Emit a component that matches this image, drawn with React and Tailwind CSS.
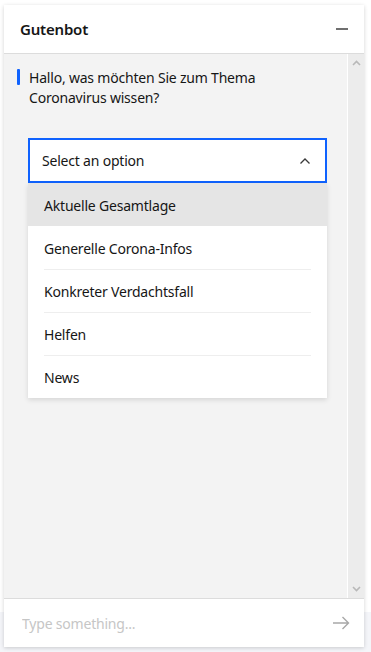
import React, { useState } from "react";

const options = [
  "Aktuelle Gesamtlage",
  "Generelle Corona-Infos",
  "Konkreter Verdachtsfall",
  "Helfen",
  "News",
];

export default function App() {
  const [hovered, setHovered] = useState(0);
  const [text, setText] = useState("");

  return (
    <div
      className="w-[371px] h-[652px] bg-white relative overflow-hidden tracking-[-0.2px]"
      style={{ fontFamily: '"Noto Sans", "Open Sans", sans-serif' }}
    >
      <div className="absolute left-0 right-0 bottom-0 h-[40px] bg-[#f4f5f9]" />
      <div className="relative ml-[4px] mt-[5px] w-[360px] h-[642px] flex flex-col bg-white shadow-[0_1px_4px_rgba(0,0,0,0.18)]">
        {/* header */}
        <div className="h-[49px] flex items-center justify-between pl-[16px] pr-[12px] border-b border-[#dcdcdc] shrink-0">
          <span className="text-[15px] font-semibold text-[#161616]">Gutenbot</span>
          <button className="w-[20px] h-[20px] flex items-center justify-center">
            <span className="block w-[12px] h-[2px] bg-[#6f6f6f]" />
          </button>
        </div>

        {/* body */}
        <div className="flex-1 flex bg-[#f3f3f3] min-h-0">
          <div className="flex-1 pt-[14px] pl-[13px] pr-[20px]">
            <div className="flex items-start">
              <span className="block w-[3px] h-[16px] bg-[#0f62fe] mt-[1px] rounded-[1px] shrink-0" />
              <p className="ml-[9px] text-[14px] leading-[20px] text-[#161616]">
                Hallo, was möchten Sie zum Thema
                <br />
                Coronavirus wissen?
              </p>
            </div>

            <div className="mt-[30px] ml-[11px] w-[299px]">
              <div className="h-[45px] border-2 border-[#0f62fe] bg-white flex items-center justify-between pl-[12px] pr-[14px]">
                <span className="text-[14px] text-[#161616]">Select an option</span>
                <svg width="12" height="8" viewBox="0 0 12 8" fill="none">
                  <path d="M1.5 6.5L6 2L10.5 6.5" stroke="#393939" strokeWidth="1.3" />
                </svg>
              </div>
              <ul className="bg-white shadow-[0_2px_5px_rgba(0,0,0,0.12)]">
                {options.map((o, i) => (
                  <li
                    key={o}
                    onMouseEnter={() => setHovered(i)}
                    className={`h-[43px] px-[16px] cursor-pointer ${hovered === i ? "bg-[#e5e5e5]" : ""}`}
                  >
                    <div
                      className={`h-full flex items-center text-[14px] text-[#161616] ${
                        i > 0 && i - 1 !== hovered && i !== hovered ? "border-t border-[#eeeeee]" : "border-t border-transparent"
                      }`}
                    >
                      {o}
                    </div>
                  </li>
                ))}
              </ul>
            </div>
          </div>

          {/* scrollbar */}
          <div className="w-[17px] border-l border-white bg-[#ececec] flex flex-col justify-between items-center py-[6px]">
            <svg width="9" height="6" viewBox="0 0 9 6">
              <path d="M1 5L4.5 1.5L8 5" stroke="#b8b8b8" strokeWidth="1.6" fill="none" />
            </svg>
            <svg width="9" height="6" viewBox="0 0 9 6">
              <path d="M1 1L4.5 4.5L8 1" stroke="#b8b8b8" strokeWidth="1.6" fill="none" />
            </svg>
          </div>
        </div>

        {/* footer */}
        <div className="h-[49px] shrink-0 border-t border-[#dcdcdc] bg-white flex items-center pl-[18px] pr-[14px]">
          <input
            value={text}
            onChange={(e) => setText(e.target.value)}
            placeholder="Type something..."
            className="flex-1 text-[14px] text-[#161616] placeholder:text-[#c6c6c6] outline-none bg-transparent"
          />
          <svg width="18" height="14" viewBox="0 0 18 14" fill="none">
            <path d="M1 7H16.5M10.5 1L16.5 7L10.5 13" stroke="#a8a8a8" strokeWidth="1.4" />
          </svg>
        </div>
      </div>
    </div>
  );
}
